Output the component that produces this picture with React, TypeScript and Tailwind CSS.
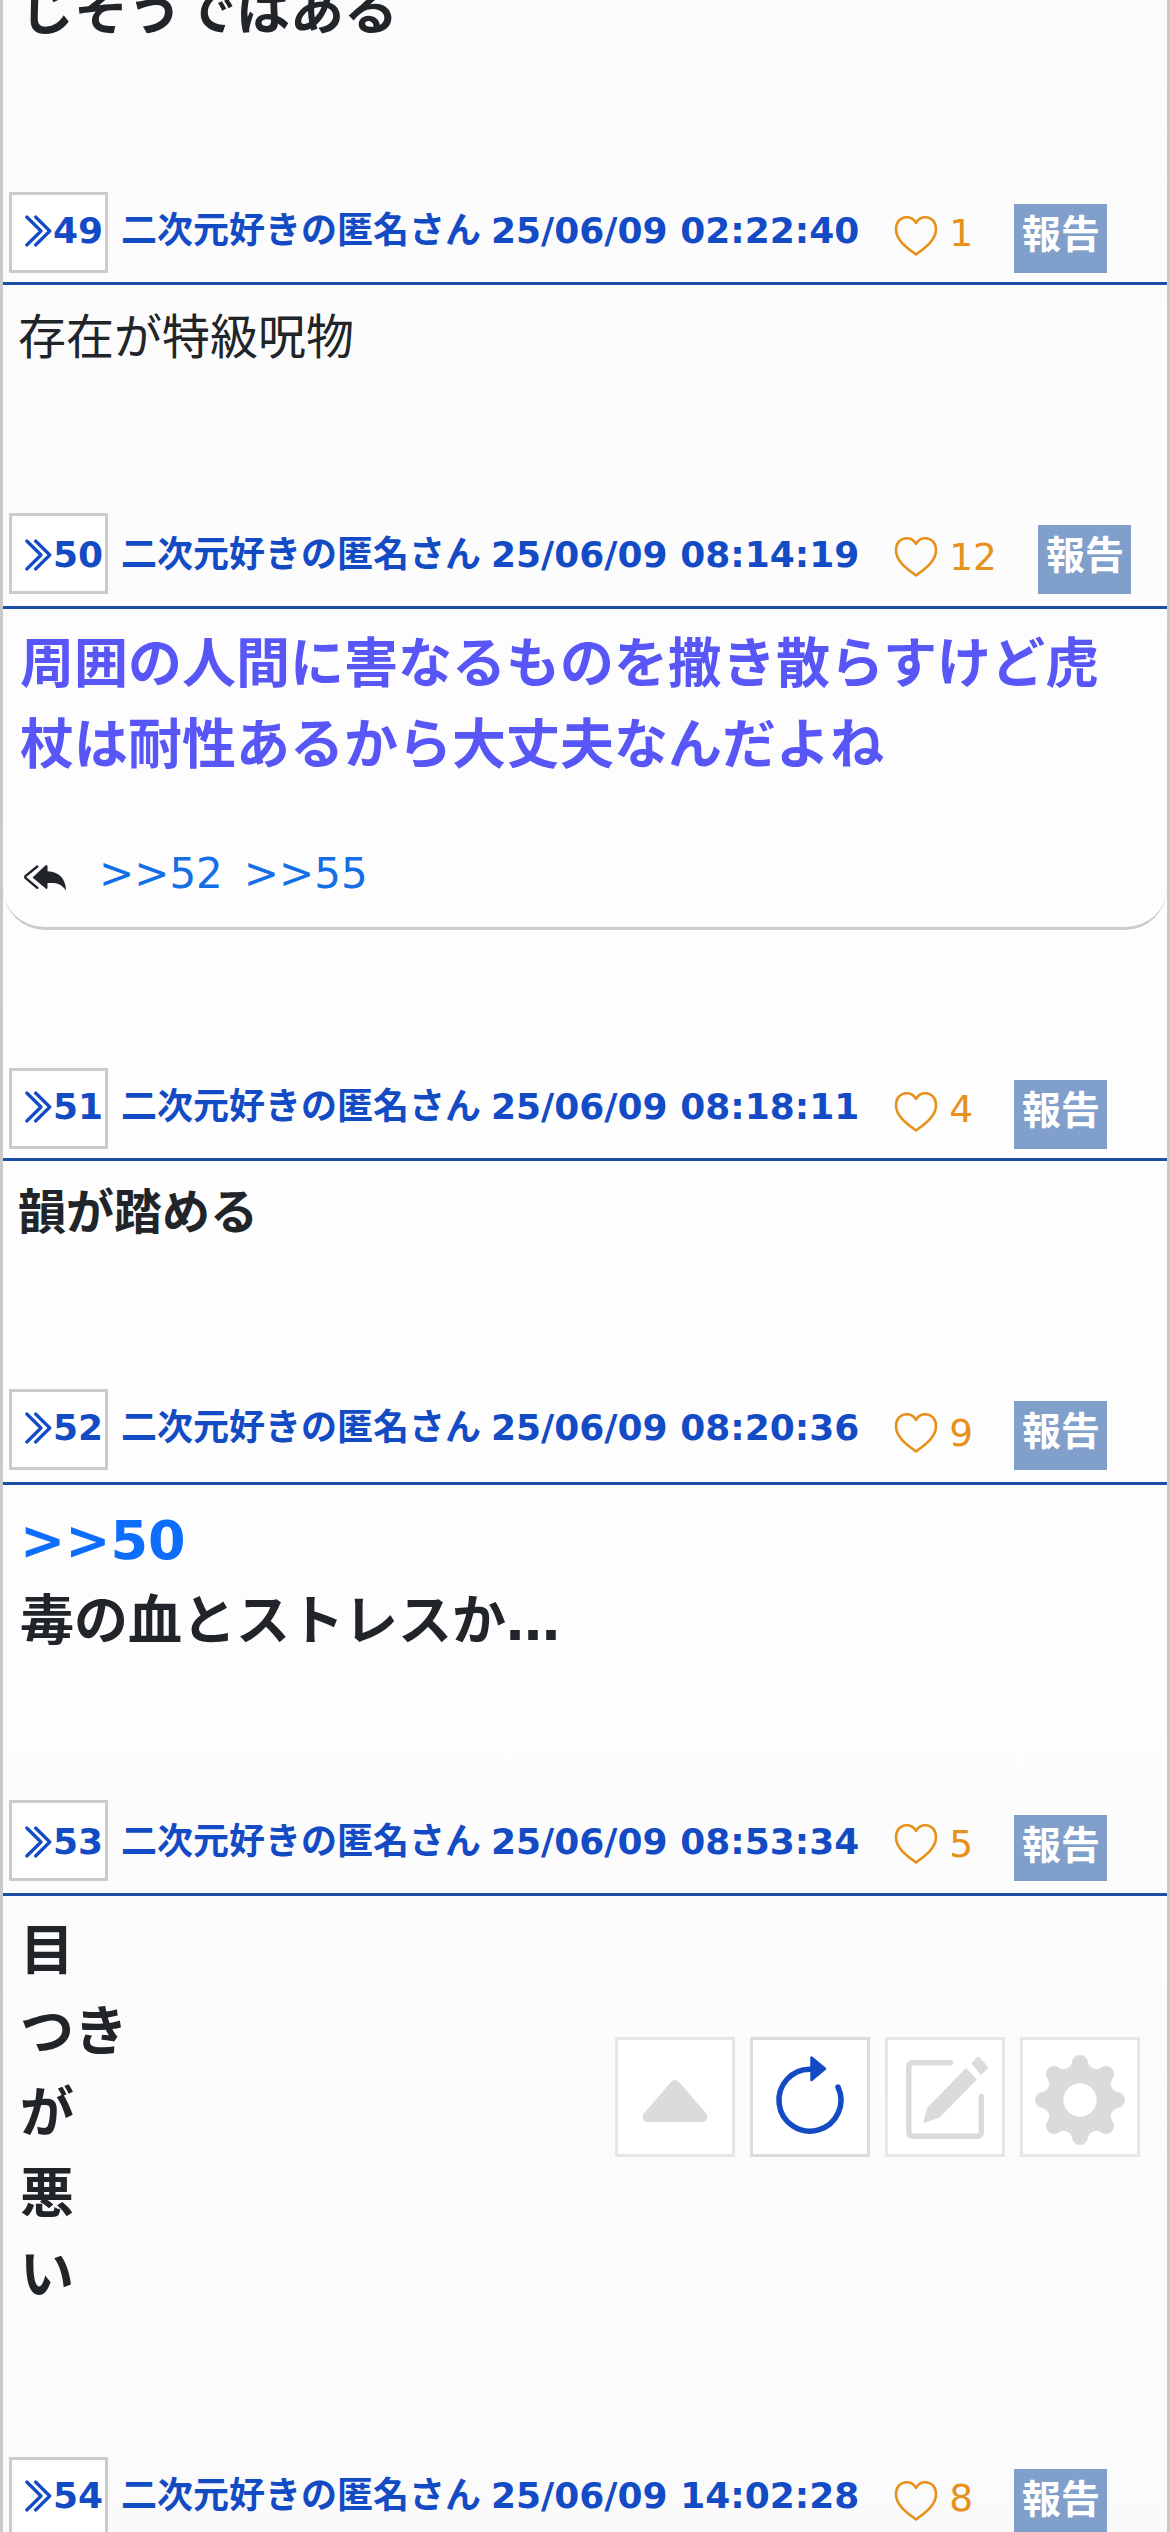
import type { ReactNode } from 'react'
import clsx from 'clsx'

type Post = {
  id: number
  date: string
  likes: number
  // some headers are a few pixels taller than others
  tall?: boolean
  low?: boolean
  body: ReactNode
  bodyClass: string
  replies?: number[]
  reportClass?: string
}

const big = 'pl-[17px] text-[54px] leading-[81px] font-bold'

const posts: Post[] = [
  {
    id: 49,
    date: '25/06/09 02:22:40',
    likes: 1,
    body: '存在が特級呪物',
    bodyClass: 'h-[228px] pt-4 pl-[15px] text-[48px] leading-[72px]',
  },
  {
    id: 50,
    date: '25/06/09 08:14:19',
    likes: 12,
    tall: true,
    low: true,
    body: '周囲の人間に害なるものを撒き散らすけど虎\n杖は耐性あるから大丈夫なんだよね',
    bodyClass: `h-[216px] pt-[15px] text-[#5856f6] ${big}`,
    replies: [52, 55],
  },
  {
    id: 51,
    date: '25/06/09 08:18:11',
    likes: 4,
    body: '韻が踏める',
    bodyClass: 'h-[228px] pt-[15px] pl-[15px] text-[48px] leading-[72px] font-bold',
  },
  {
    id: 52,
    date: '25/06/09 08:20:36',
    likes: 9,
    tall: true,
    body: (
      <>
        <a className="text-[#0d6efd]">&gt;&gt;50</a>
        {'\n毒の血とストレスか…'}
      </>
    ),
    bodyClass: `h-[315px] pt-[15px] ${big}`,
  },
  {
    id: 53,
    date: '25/06/09 08:53:34',
    likes: 5,
    tall: true,
    low: true,
    body: '目\nつき\nが\n悪\nい',
    bodyClass: `h-[561px] pt-[15px] ${big}`,
    reportClass: 'mt-[15px] h-[66px]',
  },
  {
    id: 54,
    date: '25/06/09 14:02:28',
    likes: 8,
    body: '',
    bodyClass: 'h-[228px]',
  },
]

function Heart() {
  return (
    <svg className="mt-6 ml-[35px] h-10 w-[44px]" viewBox="0 0 44 40" fill="none" stroke="#e8901c" strokeWidth="2.6" strokeLinejoin="round">
      <path d="M22 6.8 C19.5 2.8 16 1.2 13 1.2 C6 1.2 2 6.5 2 13.2 C2 24.5 14 32.5 22 38.4 C30 32.5 42 24.5 42 13.2 C42 6.5 38 1.2 31 1.2 C28 1.2 24.5 2.8 22 6.8 Z" />
    </svg>
  )
}

function PostHeader({ post }: { post: Post }) {
  return (
    <div className={clsx('flex items-start border-b-[3px] border-[#1c4ea6] pl-1.5 font-bold text-[#134bc4]', post.tall ? 'h-24' : 'h-[93px]')}>
      <div className="flex h-[81px] w-[99px] shrink-0 border-[3px] border-[#cbcbcb] bg-white pl-[13px]">
        <svg className={clsx('h-8 w-7 shrink-0', post.low ? 'mt-[23px]' : 'mt-5')} viewBox="0 0 28 32" fill="none" stroke="currentColor" strokeWidth="3.2" strokeLinecap="round" strokeLinejoin="round">
          <path d="M1.8 2 L16 16 L1.8 30 M10.6 2 L24.8 16 L10.6 30" />
        </svg>
        <span className={clsx('text-[36px] leading-[54px]', post.low ? 'mt-3' : 'mt-[9px]')}>{post.id}</span>
      </div>
      <div className={clsx('ml-[13px] flex shrink-0 gap-[10px] text-[36px] leading-[54px] whitespace-pre', post.low ? 'mt-[15px]' : 'mt-3')}>
        <span>二次元好きの匿名さん</span>
        <span>{post.date}</span>
      </div>
      <div className="flex shrink-0 text-[#e8901c]">
        <Heart />
        <span className={clsx('ml-[11px] text-[37.5px] leading-[54px] font-normal', post.tall ? 'mt-[17px]' : 'mt-3.5')}>{post.likes}</span>
      </div>
      <button
        className={clsx(
          'ml-[41px] flex w-[93px] shrink-0 justify-center bg-[#809fcb] pl-px text-[39px] leading-[62px] font-bold text-white',
          post.reportClass ?? 'mt-3 h-[69px]',
        )}
      >
        報告
      </button>
    </div>
  )
}

function Replies({ ids }: { ids: number[] }) {
  return (
    <div className="mb-[138px] flex h-[105px] rounded-b-[42px] border-b-[3px] border-[#cbcbcb] pl-5 text-[42px] leading-[63px] text-[#146ee6]">
      <svg className="mt-[38px] h-7 w-[46px]" viewBox="0 0 46 28" fill="#212529">
        <path d="M9.5 14.5 L23 2 Q24.5 1.5 24.5 3.5 V8.2 C37 8.5 43 17 43 27.5 C38.5 20.5 33 19.5 24.5 20 V24.5 Q24.5 26.5 23 25.7 Z" />
        <path d="M14.3 3.5 L2.5 13 Q1.8 14 2.5 15 L14.3 24.8" fill="none" stroke="#212529" strokeWidth="2.4" strokeLinecap="round" />
      </svg>
      {ids.map((id) => (
        <a key={id} className="mt-[17px] mr-[-9px] ml-[30px]">
          &gt;&gt;{id}
        </a>
      ))}
    </div>
  )
}

function PostItem({ post }: { post: Post }) {
  return (
    <article>
      <PostHeader post={post} />
      <div className={clsx('whitespace-pre', post.bodyClass)}>{post.body}</div>
      {post.replies && <Replies ids={post.replies} />}
    </article>
  )
}

// Outline of an eight-lobed gear, centred on 60,63
function gearPath() {
  const parts: string[] = []
  for (let i = 0; i < 8; i++) {
    const a = (i * Math.PI) / 4
    const at = (x: number, y: number) =>
      `${(60 + x * Math.cos(a) - y * Math.sin(a)).toFixed(2)} ${(63 + x * Math.sin(a) + y * Math.cos(a)).toFixed(2)}`
    parts.push(i === 0 ? `M${at(-8, -37)}` : `A9 9 0 0 0 ${at(-8, -37)}`)
    parts.push(`A8 8 0 0 1 ${at(8, -37)}`)
  }
  return `${parts.join(' ')} A9 9 0 0 0 52 26 Z M43.3 63 a16.7 16.7 0 1 0 33.4 0 a16.7 16.7 0 1 0 -33.4 0 Z`
}

function ToolButton({ active, children }: { active?: boolean; children: ReactNode }) {
  return (
    <button className={clsx('h-[120px] w-[120px] border-[3px] bg-white', active ? 'border-[#dcdcdc] text-[#134bc4]' : 'border-[#e6e6e6] text-[#dbdbdb]')}>
      <svg className="-m-[3px] h-[120px] w-[120px] max-w-none" viewBox="0 0 120 120" fill="currentColor">
        {children}
      </svg>
    </button>
  )
}

function Toolbar() {
  return (
    <div className="absolute top-[2037px] right-[27px] flex gap-[15px]">
      <ToolButton>
        <path d="M60 48 L87.5 80 H32.5 Z" stroke="currentColor" strokeWidth="10" strokeLinejoin="round" />
      </ToolButton>
      <ToolButton active>
        <path d="M61 32.2 A31 31 0 1 0 88 50" fill="none" stroke="currentColor" strokeWidth="5.5" strokeLinecap="round" />
        <path d="M61.5 20.5 V43 L75 31.7 Z" stroke="currentColor" strokeWidth="2.5" strokeLinejoin="round" />
      </ToolButton>
      <ToolButton>
        <path d="M65.5 25.7 H28 Q23.8 25.7 23.8 30 V95 Q23.8 99.3 28 99.3 H92 Q96.3 99.3 96.3 95 V59.5" fill="none" stroke="currentColor" strokeWidth="5.4" strokeLinecap="round" />
        <path d="M81 31 L92 42.5 L54.5 80.5 L39 86 Q38 86 38.2 85 L42.5 70.5 Z" />
        <path d="M86.5 26.5 L91.5 20.8 Q93 19 94.5 20.5 L102.3 29 Q103.5 30.5 102.3 32 L95.8 38 Z" />
      </ToolButton>
      <ToolButton>
        <path fillRule="evenodd" d={gearPath()} />
      </ToolButton>
    </div>
  )
}

export default function App() {
  return (
    <main
      lang="ja"
      className="relative h-[2532px] w-[1170px] overflow-hidden border-x-[3px] border-[#c9c9c9] bg-linear-to-b from-[#fbfbfb] via-[#fefefe] to-[#fafafa] font-['DejaVu_Sans','Noto_Sans_CJK_JP',sans-serif] text-[#212529]"
    >
      <div className="h-48">
        <p className="relative -top-[29px] pl-[17px] text-[54px] leading-[81px] font-bold whitespace-pre">じそうではある</p>
      </div>
      {posts.map((post) => (
        <PostItem key={post.id} post={post} />
      ))}
      <Toolbar />
    </main>
  )
}
